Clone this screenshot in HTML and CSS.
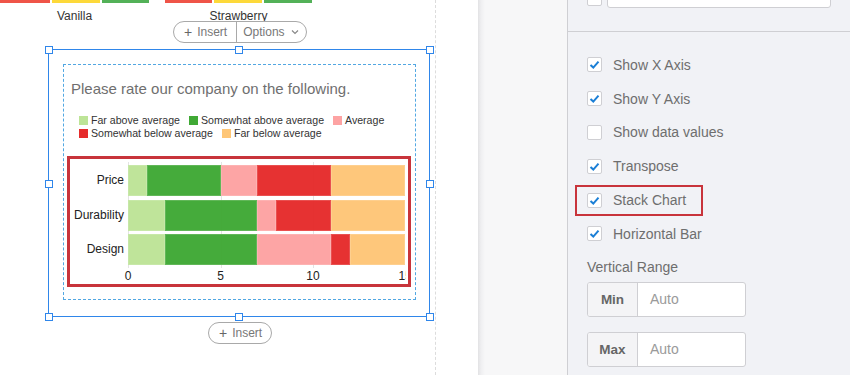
FILE: index.html
```html
<!DOCTYPE html>
<html>
<head>
<meta charset="utf-8">
<link rel="stylesheet" href="styles.css">
</head>
<body>
<div class="page">
  <div class="canvas">
    <div class="survey">
      <div class="prev">
        <div class="prev-group g1">
          <div class="prev-bars"><span class="pb red w50"></span><span class="pb yellow w48"></span><span class="pb green w47"></span></div>
          <div class="prev-label">Vanilla</div>
        </div>
        <div class="prev-group g2">
          <div class="prev-bars"><span class="pb red w47"></span><span class="pb yellow w48"></span><span class="pb green w48"></span></div>
          <div class="prev-label">Strawberry</div>
        </div>
      </div>
      <div class="btn-group top-btns">
        <span class="btn-part"><span class="plus">+</span> Insert</span>
        <span class="btn-part divider">Options <svg class="chev" width="8" height="6" viewBox="0 0 8 6"><path d="M1 1.5 L4 4.5 L7 1.5" fill="none" stroke="#888" stroke-width="1.2"/></svg></span>
      </div>
      <div class="selection">
        <span class="handle h-tl"></span><span class="handle h-tc"></span><span class="handle h-tr"></span>
        <span class="handle h-ml"></span><span class="handle h-mr"></span>
        <span class="handle h-bl"></span><span class="handle h-bc"></span><span class="handle h-br"></span>
        <div class="question">
          <div class="q-title">Please rate our company on the following.</div>
          <div class="legend">
            <div class="legend-row">
              <span class="lg"><span class="sw c1"></span>Far above average</span>
              <span class="lg"><span class="sw c2"></span>Somewhat above average</span>
              <span class="lg"><span class="sw c3"></span>Average</span>
            </div>
            <div class="legend-row">
              <span class="lg"><span class="sw c4"></span>Somewhat below average</span>
              <span class="lg"><span class="sw c5"></span>Far below average</span>
            </div>
          </div>
          <div class="chart-box">
            <div class="chart">
              <div class="ylabels">
                <div class="ylabel">Price</div>
                <div class="ylabel">Durability</div>
                <div class="ylabel">Design</div>
              </div>
              <div class="plot">
                <div class="bars">
                  <div class="bar">
                    <span class="seg c1" style="width:6.667%"></span><span class="seg c2" style="width:26.667%"></span><span class="seg c3" style="width:13.333%"></span><span class="seg c4" style="width:26.667%"></span><span class="seg c5" style="width:26.667%"></span>
                  </div>
                  <div class="bar">
                    <span class="seg c1" style="width:13.333%"></span><span class="seg c2" style="width:33.333%"></span><span class="seg c3" style="width:6.667%"></span><span class="seg c4" style="width:20%"></span><span class="seg c5" style="width:26.667%"></span>
                  </div>
                  <div class="bar">
                    <span class="seg c1" style="width:13.333%"></span><span class="seg c2" style="width:33.333%"></span><span class="seg c3" style="width:26.667%"></span><span class="seg c4" style="width:6.667%"></span><span class="seg c5" style="width:20%"></span>
                  </div>
                </div>
                <div class="xaxis">
                  <div class="ticks">
                    <span class="tick" style="left:0%">0</span>
                    <span class="tick" style="left:33.333%">5</span>
                    <span class="tick" style="left:66.667%">10</span>
                    <span class="tick last" style="left:100%">15</span>
                  </div>
                </div>
              </div>
            </div>
          </div>
        </div>
      </div>
      <div class="btn-group bottom-btn">
        <span class="btn-part"><span class="plus">+</span> Insert</span>
      </div>
    </div>
    <div class="spacer"></div>
  </div>
  <div class="gutter"></div>
  <div class="panel">
    <div class="panel-top">
      <span class="cb cb-top"></span>
      <span class="top-input"></span>
    </div>
    <div class="options">
      <div class="opt"><span class="cb"><svg viewBox="0 0 15 15" width="15" height="15"><path d="M3.5 8 L6.3 10.6 L11.5 4.6" fill="none" stroke="#1b7fd6" stroke-width="2"/></svg></span><span class="opt-label">Show X Axis</span></div>
      <div class="opt"><span class="cb"><svg viewBox="0 0 15 15" width="15" height="15"><path d="M3.5 8 L6.3 10.6 L11.5 4.6" fill="none" stroke="#1b7fd6" stroke-width="2"/></svg></span><span class="opt-label">Show Y Axis</span></div>
      <div class="opt"><span class="cb"></span><span class="opt-label">Show data values</span></div>
      <div class="opt"><span class="cb"><svg viewBox="0 0 15 15" width="15" height="15"><path d="M3.5 8 L6.3 10.6 L11.5 4.6" fill="none" stroke="#1b7fd6" stroke-width="2"/></svg></span><span class="opt-label">Transpose</span></div>
      <div class="opt highlight"><span class="cb"><svg viewBox="0 0 15 15" width="15" height="15"><path d="M3.5 8 L6.3 10.6 L11.5 4.6" fill="none" stroke="#1b7fd6" stroke-width="2"/></svg></span><span class="opt-label">Stack Chart</span></div>
      <div class="opt"><span class="cb"><svg viewBox="0 0 15 15" width="15" height="15"><path d="M3.5 8 L6.3 10.6 L11.5 4.6" fill="none" stroke="#1b7fd6" stroke-width="2"/></svg></span><span class="opt-label">Horizontal Bar</span></div>
    </div>
    <div class="range-label">Vertical Range</div>
    <div class="range-input"><span class="ri-label">Min</span><span class="ri-value">Auto</span></div>
    <div class="range-input second"><span class="ri-label">Max</span><span class="ri-value">Auto</span></div>
  </div>
</div>
</body>
</html>
```

FILE: styles.css
```css
* { box-sizing: border-box; }
html, body { margin: 0; padding: 0; }
body {
  width: 850px;
  height: 375px;
  overflow: hidden;
  background: #fff;
  font-family: "Liberation Sans", Arial, sans-serif;
}
.page {
  display: flex;
  width: 850px;
  height: 375px;
}
.canvas {
  display: flex;
  width: 478px;
  height: 375px;
  background: #fff;
}
.survey {
  width: 436px;
  height: 375px;
  border-right: 1px dashed #dcdcdc;
}
.spacer { flex: 1; }
.gutter {
  width: 89px;
  height: 375px;
  background: linear-gradient(to right, #e2e2e4 0px, #efeff1 3px, #f7f7f8 7px, #f7f7f8 100%);
}
.panel {
  flex: 1;
  height: 375px;
  background: #f1f2f6;
  border-left: 1px solid #cfcfd3;
}

/* previous question remnants */
.prev {
  display: flex;
  height: 21px;
}
.prev-group { display: flex; flex-direction: column; align-items: center; }
.g2 { margin-left: 16px; }
.prev-bars { display: flex; gap: 2px; height: 3px; }
.pb { display: block; height: 3px; }
.w50 { width: 50px; }
.w48 { width: 48px; }
.w47 { width: 47px; }
.red { background: #ef5448; }
.yellow { background: #fdd93a; }
.green { background: #53b158; }
.prev-label {
  margin-top: 6px;
  font-size: 12px;
  line-height: 14px;
  color: #333;
}

/* pill buttons */
.btn-group {
  display: inline-flex;
  height: 22px;
  border: 1px solid #a9a9a9;
  border-radius: 11px;
  background: #fff;
  color: #777;
  font-size: 12px;
  line-height: 20px;
}
.top-btns { margin-left: 173px; width: 134px; }
.btn-part { display: flex; align-items: center; padding: 0 9px 0 10px; }
.top-btns .btn-part:first-child { width: 63px; }
.divider { border-left: 1px solid #a9a9a9; flex: 1; padding-left: 6px; }
.plus { font-size: 14px; margin-right: 5px; color: #666; }
.chev { margin-left: 6px; }
.bottom-btn { margin-left: 208px; margin-top: 5px; width: 64px; }

/* selection */
.selection {
  position: relative;
  margin-top: 6px;
  margin-left: 48px;
  width: 382px;
  height: 268px;
  border: 1px solid #2f86ea;
}
.handle {
  position: absolute;
  width: 8px;
  height: 8px;
  background: #fff;
  border: 1px solid #2f86ea;
}
.h-tl { left: -4.5px; top: -4.5px; }
.h-tc { left: 185.5px; top: -4.5px; }
.h-tr { right: -4.5px; top: -4.5px; }
.h-ml { left: -4.5px; top: 129.5px; }
.h-mr { right: -4.5px; top: 129.5px; }
.h-bl { left: -4.5px; bottom: -4.5px; }
.h-bc { left: 185.5px; bottom: -4.5px; }
.h-br { right: -4.5px; bottom: -4.5px; }

.question {
  margin: 14px 0 0 14px;
  width: 353px;
  height: 236px;
  border: 1px dashed #52a7e2;
  padding-top: 15px;
}
.q-title {
  padding-left: 7px;
  font-size: 15px;
  line-height: 18px;
  color: #6f6f6f;
}
.legend {
  margin-top: 16px;
  padding-left: 15px;
  font-size: 10.6px;
  line-height: 13px;
  color: #333;
}
.legend-row { display: flex; gap: 9px; }
.lg { display: flex; align-items: center; }
.sw { display: inline-block; width: 9px; height: 9px; margin-right: 3px; }
.c1 { background: #bde497; }
.c2 { background: #40a935; }
.c3 { background: #fda3a3; }
.c4 { background: #e62c2c; }
.c5 { background: #fec677; }

.chart-box {
  margin: 16px 0 0 3px;
  width: 344px;
  height: 131px;
  border: 3px solid #c8343b;
}
.chart {
  display: flex;
  padding-top: 6px;
  height: 125px;
}
.ylabels {
  width: 54px;
  display: flex;
  flex-direction: column;
  gap: 3.5px;
}
.ylabel {
  height: 31px;
  line-height: 31px;
  text-align: right;
  font-size: 12px;
  color: #222;
}
.plot {
  margin-left: 4px;
  width: 277.5px;
}
.bars {
  display: flex;
  flex-direction: column;
  gap: 3.5px;
  width: 277.5px;
  background:
    linear-gradient(#e3e3e3, #e3e3e3) 0 0 / 1px 100% no-repeat,
    linear-gradient(#e3e3e3, #e3e3e3) 92.5px 0 / 1px 100% no-repeat,
    linear-gradient(#e3e3e3, #e3e3e3) 185px 0 / 1px 100% no-repeat;
  padding-top: 3px;
  padding-bottom: 3px;
  margin-top: -3px;
}
.bar { display: flex; height: 31px; }
.seg { display: block; height: 31px; opacity: 0.97; box-shadow: inset 0 0 0 1px rgba(255,255,255,0.15); }
.xaxis {
  margin-left: -12px;
  width: 289.5px;
  height: 14px;
  margin-top: 1px;
  overflow: hidden;
  font-size: 12px;
  line-height: 14px;
  color: #222;
}
.ticks {
  position: relative;
  margin-left: 12px;
  width: 277.5px;
  height: 14px;
}
.tick {
  position: absolute;
  top: 0;
  transform: translateX(-50%);
}
.tick.last { transform: translateX(-7px); }

/* panel */
.panel-top {
  height: 32px;
  border-bottom: 1px solid #cfcfd3;
  display: flex;
  align-items: flex-start;
  padding-left: 19px;
}
.cb {
  display: block;
  width: 15px;
  height: 15px;
  background: #fff;
  border: 1px solid #cfcfd3;
  border-radius: 2px;
  flex: none;
}
.cb svg { display: block; margin: -1px 0 0 -1px; }
.cb-top { margin-top: -9px; }
.top-input {
  display: block;
  margin-left: 5px;
  margin-top: -10px;
  width: 224px;
  height: 18px;
  background: #fff;
  border: 1px solid #cfcfd3;
  border-radius: 3px;
}
.options { padding-top: 16px; padding-left: 19px; }
.opt {
  position: relative;
  display: flex;
  align-items: center;
  height: 33.8px;
  width: fit-content;
}
.opt-label {
  margin-left: 11px;
  font-size: 14px;
  color: #6e6e6e;
}
.highlight::after {
  content: "";
  position: absolute;
  top: 1.5px;
  bottom: 1px;
  left: -12px;
  right: -17px;
  border: 2px solid #c8343b;
}
.range-label {
  margin: 7px 0 0 19px;
  font-size: 14px;
  line-height: 18px;
  color: #6e6e6e;
}
.range-input {
  display: flex;
  margin: 6px 0 0 19px;
  width: 159px;
  height: 35px;
  border: 1px solid #cfcfd3;
  border-radius: 3px;
  background: #fff;
  overflow: hidden;
}
.range-input.second { margin-top: 15px; }
.ri-label {
  width: 50px;
  display: flex;
  align-items: center;
  justify-content: center;
  background: #f4f4f6;
  border-right: 1px solid #cfcfd3;
  font-size: 13.5px;
  font-weight: bold;
  color: #666;
}
.ri-value {
  display: flex;
  align-items: center;
  padding-left: 12px;
  font-size: 14px;
  color: #9a9a9a;
}
```
